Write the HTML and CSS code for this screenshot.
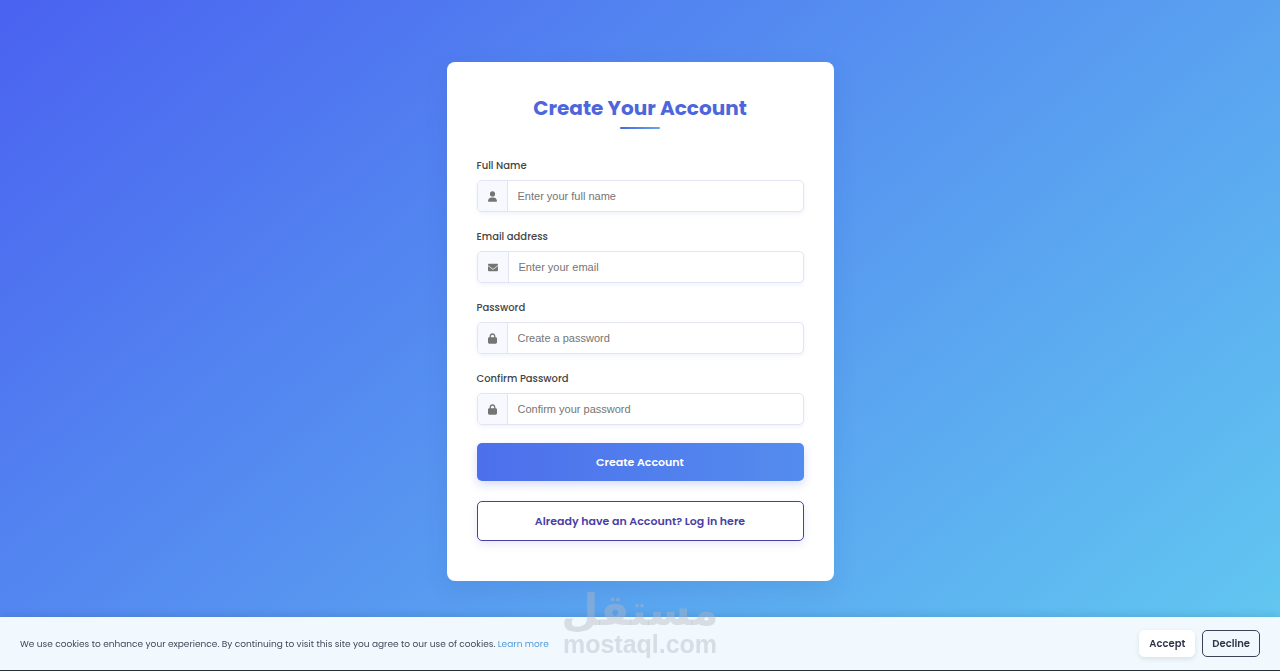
FILE: index.html
```html
<!DOCTYPE html>
<html lang="en">
<head>
<meta charset="utf-8">
<meta name="viewport" content="width=device-width, initial-scale=1">
<title>Create Your Account</title>
<link rel="stylesheet" href="styles.css">
</head>
<body>
<main class="page">
  <section class="card">
    <h1 class="title">Create Your Account</h1>
    <form class="form">
      <div class="field">
        <label class="label" for="name">Full Name</label>
        <div class="group">
          <span class="addon"><svg width="9" height="11" viewBox="0 0 448 512" aria-hidden="true"><path d="M224 256A128 128 0 1 0 224 0a128 128 0 1 0 0 256zm-45.700 48C79.800 304 0 383.800 0 482.300C0 498.700 13.300 512 29.700 512H418.300c16.400 0 29.700-13.300 29.700-29.700C448 383.800 368.200 304 269.700 304H178.300z"/></svg></span>
          <input class="input" id="name" type="text" placeholder="Enter your full name">
        </div>
      </div>
      <div class="field">
        <label class="label" for="email">Email address</label>
        <div class="group">
          <span class="addon"><svg width="10" height="11" viewBox="0 0 512 512" aria-hidden="true"><path d="M48 64C21.500 64 0 85.500 0 112c0 15.100 7.100 29.300 19.200 38.400L236.800 313.600c11.400 8.500 27 8.500 38.400 0L492.800 150.400c12.100-9.100 19.200-23.300 19.200-38.400c0-26.500-21.500-48-48-48H48zM0 176V384c0 35.300 28.700 64 64 64H448c35.300 0 64-28.700 64-64V176L294.400 339.200c-22.800 17.100-54 17.100-76.800 0L0 176z"/></svg></span>
          <input class="input" id="email" type="email" placeholder="Enter your email">
        </div>
      </div>
      <div class="field">
        <label class="label" for="password">Password</label>
        <div class="group">
          <span class="addon"><svg width="9" height="11" viewBox="0 0 448 512" aria-hidden="true"><path d="M144 144v48H304V144c0-44.200-35.800-80-80-80s-80 35.800-80 80zM80 192V144C80 64.500 144.500 0 224 0s144 64.500 144 144v48h16c35.300 0 64 28.700 64 64V448c0 35.300-28.700 64-64 64H64c-35.300 0-64-28.700-64-64V256c0-35.300 28.700-64 64-64H80z"/></svg></span>
          <input class="input" id="password" type="password" placeholder="Create a password">
        </div>
      </div>
      <div class="field">
        <label class="label" for="confirm">Confirm Password</label>
        <div class="group">
          <span class="addon"><svg width="9" height="11" viewBox="0 0 448 512" aria-hidden="true"><path d="M144 144v48H304V144c0-44.200-35.800-80-80-80s-80 35.800-80 80zM80 192V144C80 64.500 144.500 0 224 0s144 64.500 144 144v48h16c35.300 0 64 28.700 64 64V448c0 35.300-28.700 64-64 64H64c-35.300 0-64-28.700-64-64V256c0-35.300 28.700-64 64-64H80z"/></svg></span>
          <input class="input" id="confirm" type="password" placeholder="Confirm your password">
        </div>
      </div>
      <button class="submit" type="submit">Create Account</button>
      <a class="login" href="#">Already have an Account? Log in here</a>
    </form>
  </section>
</main>
<footer class="cookies">
  <p class="notice">We use cookies to enhance your experience. By continuing to visit this site you agree to our use of cookies. <a class="more" href="#">Learn more</a></p>
  <div class="actions">
    <button class="choice accept" type="button">Accept</button>
    <button class="choice decline" type="button">Decline</button>
  </div>
</footer>
<div class="watermark">
  <span class="mark-ar" lang="ar" dir="rtl">مستقل</span>
  <span class="mark-en">mostaql.com</span>
</div>
</body>
</html>
```
FILE: styles.css
```css
* { box-sizing: border-box; }

body {
  margin: 0;
  min-height: 100vh;
  font-family: Poppins, Inter, "Open Sans", sans-serif;
  font-size: 9px;
  color: #444;
  background: linear-gradient(140deg, #4a62f0 0%, #5796f0 50%, #62caf0 100%) no-repeat fixed;
}

.page {
  display: flex;
  justify-content: center;
  padding: 62px 20px 90px;
}

.card {
  width: 100%;
  max-width: 387px;
  padding: 30px 30px 40px;
  border-radius: 8px;
  background: #fff;
  box-shadow: 0 8px 24px rgba(40, 60, 140, 0.1);
}

.title {
  margin: 0 0 29px;
  font-size: 20px;
  line-height: 32px;
  font-weight: 700;
  text-align: center;
  color: #4d66dc;
}

.title::after {
  content: "";
  display: block;
  width: 40px;
  height: 2px;
  margin: 3px auto 0;
  border-radius: 2px;
  background: linear-gradient(90deg, #4d66dc, #62a5ee);
}

.form { display: flex; flex-direction: column; }

.field { margin-bottom: 17px; }

.label {
  display: block;
  margin-bottom: 6px;
  font-size: 10px;
  line-height: 16px;
  font-weight: 500;
  color: #444;
}

.group {
  display: flex;
  height: 32px;
  border: 1px solid #e3e4f3;
  border-radius: 5px;
  overflow: hidden;
  background: #fff;
  box-shadow: 0 2px 4px rgba(77, 102, 220, 0.08);
}

.addon {
  display: flex;
  align-items: center;
  padding: 0 10px;
  border-right: 1px solid #e3e4f3;
  background: #f8f9ff;
}

.addon svg { fill: #757575; }

.input {
  flex: 1;
  min-width: 0;
  padding: 0 10px;
  border: 0;
  outline: 0;
  background: transparent;
  font-family: "Liberation Sans", Arial, sans-serif;
  font-size: 11px;
  color: #333;
}

.input::placeholder { color: #757575; }

.submit {
  height: 38px;
  margin: 1px 0 20px;
  border: 0;
  border-radius: 5px;
  background: linear-gradient(90deg, #4d6fec, #548cee);
  box-shadow: 0 4px 10px rgba(77, 102, 220, 0.22);
  font-family: inherit;
  font-size: 11px;
  font-weight: 600;
  color: #fff;
}

.login {
  display: flex;
  align-items: center;
  justify-content: center;
  height: 40px;
  border: 1px solid #4a3fa5;
  border-radius: 5px;
  box-shadow: 0 3px 8px rgba(77, 102, 220, 0.14);
  font-size: 11px;
  font-weight: 600;
  color: #4a3fa5;
  text-decoration: none;
}

.cookies {
  position: fixed;
  right: 0;
  bottom: 0;
  left: 0;
  display: flex;
  align-items: center;
  justify-content: space-between;
  gap: 20px;
  padding: 13px 20px;
  border-bottom: 1px solid #2b2f36;
  background: #f1f8fe;
  box-shadow: 0 -2px 8px rgba(0, 0, 0, 0.1);
}

.notice { margin: 0; line-height: 16px; color: #414a5a; }

.more { color: #539bd9; text-decoration: none; }

.actions { display: flex; gap: 7px; }

.choice {
  height: 27px;
  padding: 0 9px;
  border: 1px solid #fff;
  border-radius: 5px;
  font-family: inherit;
  font-size: 10px;
  font-weight: 600;
  color: #2f3548;
}

.accept { background: #fff; box-shadow: 0 2px 5px rgba(0, 0, 0, 0.1); }

.decline { border-color: #3c4256; background: transparent; }

.watermark {
  position: fixed;
  bottom: 14px;
  left: 50%;
  display: flex;
  flex-direction: column;
  align-items: center;
  transform: translateX(-50%);
  color: rgba(180, 184, 192, 0.42);
  font-weight: 700;
  pointer-events: none;
}

.mark-ar { font-family: "DejaVu Sans", sans-serif; font-size: 43px; line-height: 44px; }

.mark-en { font-family: "Liberation Sans", Arial, sans-serif; font-size: 25px; line-height: 25px; }
```
